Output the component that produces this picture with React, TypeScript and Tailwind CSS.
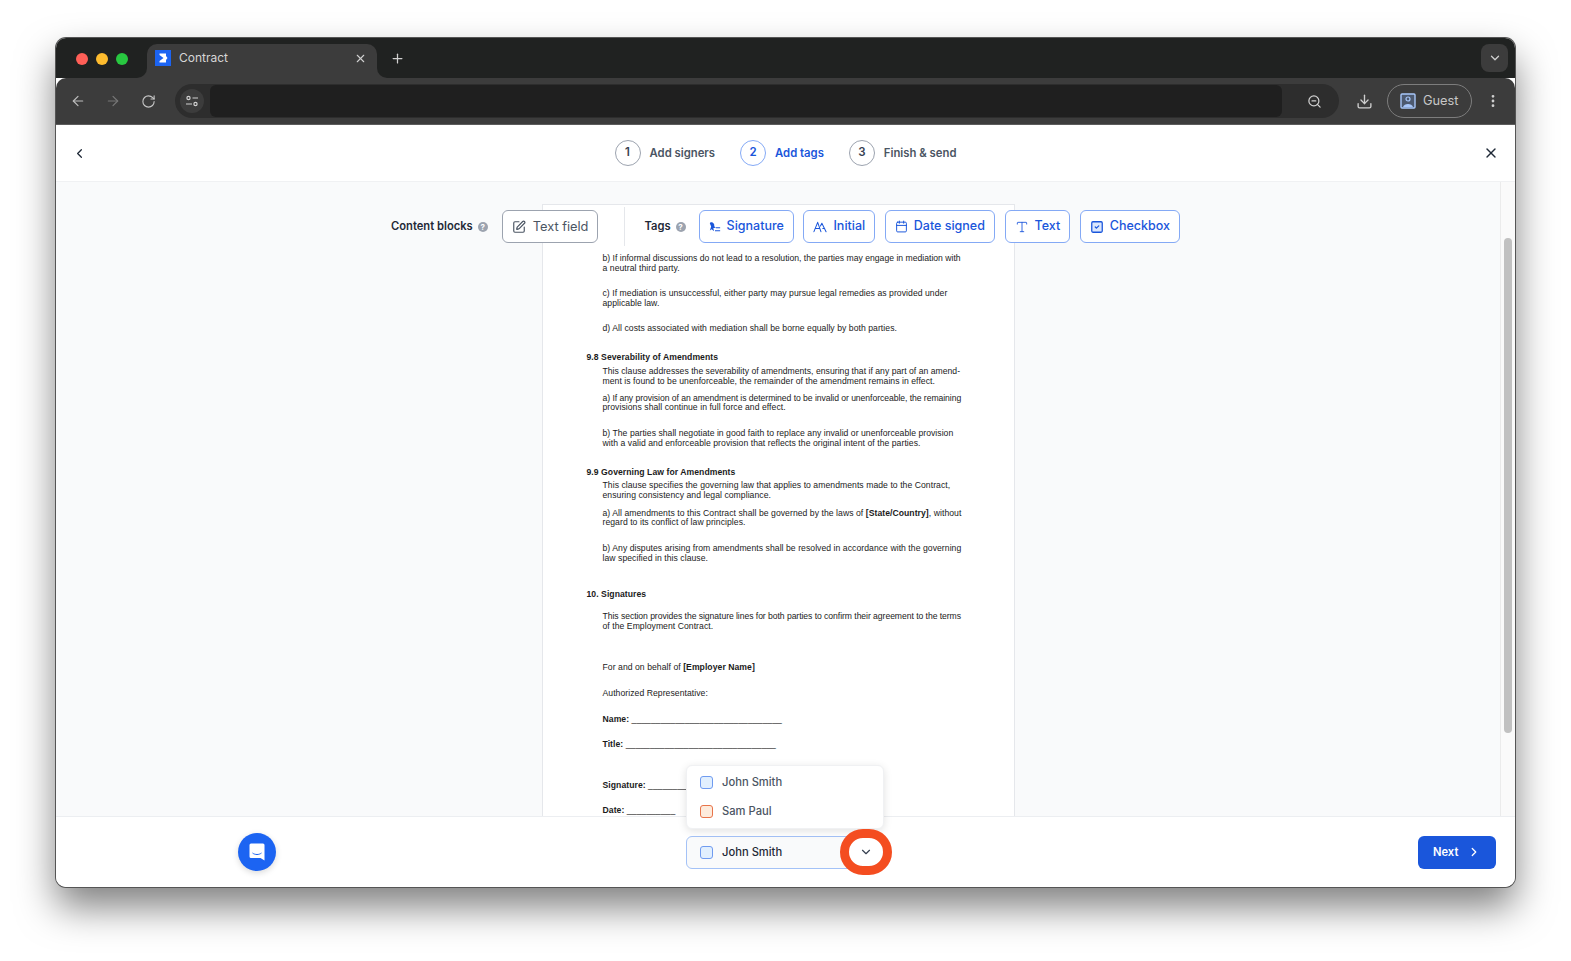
import React from "react";
import {
  ArrowLeft,
  ArrowRight,
  Calendar,
  ChevronDown,
  ChevronLeft,
  ChevronRight,
  Download,
  EllipsisVertical,
  Plus,
  RotateCw,
  SquareCheck,
  SquarePen,
  Type,
  X,
  ZoomOut,
} from "lucide-react";

const Help = () => (
  <span className="flex h-[10px] w-[10px] items-center justify-center rounded-full bg-[#9ca3af] text-[8px] font-bold leading-none text-white">
    ?
  </span>
);

const SignatureIcon = () => (
  <svg width="12" height="14" viewBox="0 0 14 14" fill="none">
    <path d="M1 3 C1 1.5 3 1 4.5 2 C6 3 6.5 4.5 6 6 L8 7.5 L5 8.5 L6 12 L3 9.5 L1 11 L2.5 6.5 Z" fill="#1a56db" />
    <path d="M8 8 H13 M7 11.5 H13" stroke="#1a56db" strokeWidth="1.2" />
  </svg>
);

const InitialIcon = () => (
  <svg width="14" height="14" viewBox="0 0 15 14" fill="none" stroke="#1a56db" strokeWidth="1.1" strokeLinecap="round" strokeLinejoin="round">
    <path d="M1 12 L5 2 L8.5 12 M2.8 8.5 H7" />
    <path d="M8 6 L9.5 3 L14 12 M10.5 8.5 H12.5" />
  </svg>
);

const TagButton = ({ icon, label }: { icon: React.ReactNode; label: string }) => (
  <button className="flex h-[33px] items-center gap-[6px] rounded-[6px] border border-[#84a9f5] bg-white px-[9px] text-[12.5px] font-medium text-[#1a56db]">
    {icon}
    {label}
  </button>
);

const Step = ({ n, label, active }: { n: number; label: string; active?: boolean }) => (
  <div className="flex items-center gap-[9px]">
    <span
      className={`flex h-[26px] w-[26px] items-center justify-center rounded-full border text-[11.5px] font-semibold ${
        active ? "border-[#84a9f5] text-[#1a56db]" : "border-[#9ca3af] text-[#374151]"
      }`}
    >
      {n}
    </span>
    <span className={`text-[11.3px] font-semibold ${active ? "text-[#1a56db]" : "text-[#4b5563]"}`}>{label}</span>
  </div>
);

const SignerBox = ({ orange }: { orange?: boolean }) => (
  <span
    className={`h-[13px] w-[13px] rounded-[3px] border ${
      orange ? "border-[#e8744a] bg-[#fdebdc]" : "border-[#6f9bf0] bg-[#e1effe]"
    }`}
  />
);

// Body text of the contract page, with line breaks as in the PDF
const P = ({ className, children }: { className?: string; children: React.ReactNode }) => (
  <p className={`ml-[60px] whitespace-nowrap ${className ?? ""}`}>{children}</p>
);

const H = ({ className, children }: { className: string; children: React.ReactNode }) => (
  <p className={`ml-[44px] whitespace-nowrap font-bold ${className}`}>{children}</p>
);

const ContractPage = () => (
  <div className="h-[640px] w-[473px] shrink-0 border-x border-t border-[#e5e7eb] bg-white pt-[49px] font-['Liberation_Sans',Arial,sans-serif] text-[8.65px] leading-[9.7px] tracking-[0.05px] text-[#1b1b1b]">
    <P>
      <span className="tracking-normal">
        b) If informal discussions do not lead to a resolution, the parties may engage in mediation with
      </span>
      <br />a neutral third party.
    </P>
    <P className="mt-[16px]">
      c) If mediation is unsuccessful, either party may pursue legal remedies as provided under
      <br />
      applicable law.
    </P>
    <P className="mt-[15px]">d) All costs associated with mediation shall be borne equally by both parties.</P>
    <H className="mt-[19px]">9.8 Severability of Amendments</H>
    <P className="mt-[5px]">
      <span className="tracking-[0.02px]">
        This clause addresses the severability of amendments, ensuring that if any part of an amend-
      </span>
      <br />
      ment is found to be unenforceable, the remainder of the amendment remains in effect.
    </P>
    <P className="mt-[7px]">
      <span className="tracking-[-0.06px]">
        a) If any provision of an amendment is determined to be invalid or unenforceable, the remaining
      </span>
      <br />
      provisions shall continue in full force and effect.
    </P>
    <P className="mt-[16px]">
      <span className="tracking-[0.03px]">
        b) The parties shall negotiate in good faith to replace any invalid or unenforceable provision
      </span>
      <br />
      with a valid and enforceable provision that reflects the original intent of the parties.
    </P>
    <H className="mt-[20px]">9.9 Governing Law for Amendments</H>
    <P className="mt-[3px]">
      This clause specifies the governing law that applies to amendments made to the Contract,
      <br />
      ensuring consistency and legal compliance.
    </P>
    <P className="mt-[8px]">
      a) All amendments to this Contract shall be governed by the laws of <b>[State/Country]</b>, without
      <br />
      regard to its conflict of law principles.
    </P>
    <P className="mt-[16px]">
      b) Any disputes arising from amendments shall be resolved in accordance with the governing
      <br />
      law specified in this clause.
    </P>
    <H className="mt-[27px]">10. Signatures</H>
    <P className="mt-[12px]">
      <span className="tracking-[-0.06px]">
        This section provides the signature lines for both parties to confirm their agreement to the terms
      </span>
      <br />
      of the Employment Contract.
    </P>
    <P className="mt-[32px]">
      For and on behalf of <b>[Employer Name]</b>
    </P>
    <P className="mt-[16px]">Authorized Representative:</P>
    <P className="mt-[16px]">
      <b>Name:</b> _______________________________
    </P>
    <P className="mt-[15px]">
      <b>Title:</b> _______________________________
    </P>
    <P className="mt-[32px]">
      <b>Signature:</b> ________
    </P>
    <P className="mt-[15px]">
      <b>Date:</b> __________
    </P>
  </div>
);

const BrowserChrome = () => (
  <div className="shrink-0 font-['Inter',sans-serif]">
    <div className="flex h-[40px] items-end bg-[#202221] pl-[20px]">
      <div className="mb-[13px] flex gap-[8px]">
        <span className="h-[12px] w-[12px] rounded-full bg-[#ff5f57]" />
        <span className="h-[12px] w-[12px] rounded-full bg-[#febc2e]" />
        <span className="h-[12px] w-[12px] rounded-full bg-[#28c840]" />
      </div>
      <div className="relative ml-[19px] flex h-[34px] w-[230px] items-center rounded-t-[10px] bg-[#3c3c3c] pb-[6px] pl-[8px] pr-[10px]">
        {/* flares where the tab meets the toolbar */}
        <span className="absolute bottom-0 left-[-10px] h-[10px] w-[10px] bg-[#3c3c3c]">
          <span className="block h-full w-full rounded-br-[10px] bg-[#202221]" />
        </span>
        <span className="absolute bottom-0 right-[-10px] h-[10px] w-[10px] bg-[#3c3c3c]">
          <span className="block h-full w-full rounded-bl-[10px] bg-[#202221]" />
        </span>
        <span className="flex h-4 w-4 items-center justify-center bg-[#1c64f2]">
          <svg width="16" height="16" viewBox="0 0 16 16">
            <path d="M4.5 3.5 H11 V6 L12.5 8 L11 10 V12.5 H4.5 V11 L8.5 8 L4.5 5 Z" fill="white" />
          </svg>
        </span>
        <span className="ml-[8px] flex-1 text-[12px] text-[#d6d6d6]">Contract</span>
        <X size={13} strokeWidth={2} className="text-[#d0d0d0]" />
      </div>
      <Plus size={15} strokeWidth={2} className="mb-[12px] ml-[13px] text-[#d0d0d0]" />
      <div className="mb-[6px] ml-auto mr-[7px] flex h-[28px] w-[27px] items-center justify-center rounded-[8px] bg-[#3c3c3c]">
        <ChevronDown size={14} strokeWidth={2.2} className="text-[#d0d0d0]" />
      </div>
    </div>
    <div className="flex h-[47px] items-center rounded-t-[10px] border-b border-[#5c5c5c] bg-[#3c3c3c] pl-[14px]">
      <ArrowLeft size={16} strokeWidth={1.8} className="text-[#bdbdbd]" />
      <ArrowRight size={16} strokeWidth={1.8} className="ml-[19px] text-[#777777]" />
      <RotateCw size={15} strokeWidth={1.8} className="ml-[20px] text-[#c4c4c4]" />
      <div className="ml-[19px] flex h-[34px] w-[1164px] items-center rounded-full bg-[#2d2d2d] pl-[5px]">
        <span className="flex h-[24px] w-[24px] items-center justify-center rounded-full bg-[#3c3c3c]">
          <svg width="14" height="14" viewBox="0 0 14 14" fill="none" stroke="#d0d0d0" strokeWidth="1.2">
            <circle cx="3.5" cy="4" r="1.6" />
            <path d="M7.5 4 H13 M1 10 H7" />
            <circle cx="10.5" cy="10" r="1.6" />
          </svg>
        </span>
        <div className="ml-[6px] h-[32px] w-[1072px] rounded-[6px] bg-[#1f1f1f]" />
        <ZoomOut size={15} strokeWidth={2} className="ml-[25px] text-[#cfcfcf]" />
      </div>
      <Download size={17} strokeWidth={1.9} className="ml-[17px] text-[#cfcfcf]" />
      <div className="ml-[14px] flex h-[34px] w-[85px] items-center gap-[7px] rounded-full border border-[#7d7d7d] pl-[12px]">
        <svg width="16" height="16" viewBox="0 0 16 16" fill="none">
          <rect x="1" y="1" width="14" height="14" rx="1" fill="#4d5a70" stroke="#a8c7fa" strokeWidth="1.4" />
          <circle cx="8" cy="6" r="2" stroke="#a8c7fa" strokeWidth="1.2" />
          <path d="M3 14 C4 10 12 10 13 14 Z" fill="#a8c7fa" />
        </svg>
        <span className="text-[12.8px] text-[#c7c7c7]">Guest</span>
      </div>
      <EllipsisVertical size={16} strokeWidth={2.2} className="ml-[13px] text-[#cfcfcf]" />
    </div>
  </div>
);

const App: React.FC = () => {
  return (
    <div className="h-[961px] w-[1571px] overflow-hidden bg-white pl-[56px] pt-[38px] font-['Inter',sans-serif]">
      <div className="flex h-[849px] w-[1459px] flex-col overflow-hidden rounded-[10px] bg-white shadow-[0_0_0_1px_#555555,0_20px_38px_rgba(0,0,0,0.5)]">
        <BrowserChrome />

        {/* Stepper */}
        <header className="flex h-[57px] shrink-0 items-center justify-between border-b border-[#f0f1f3] px-[16px]">
          <ChevronLeft size={15} strokeWidth={2} className="text-[#1f2937]" />
          <div className="ml-[1px] flex gap-[25px]">
            <Step n={1} label="Add signers" />
            <Step n={2} label="Add tags" active />
            <Step n={3} label="Finish & send" />
          </div>
          <X size={16} strokeWidth={2} className="text-[#1f2937]" />
        </header>

        {/* Document area */}
        <main className="relative flex min-h-0 flex-1 overflow-hidden">
          <div className="flex flex-1 justify-center bg-[#f9fafb] pt-[22px]">
            <ContractPage />
          </div>
          <div className="w-[15px] shrink-0 border-l border-[#ebebeb] bg-[#fafafa] pl-[3px] pt-[56px]">
            <div className="h-[495px] w-[8px] rounded-full bg-[#c1c1c1]" />
          </div>

          {/* Toolbar floats over the page */}
          <div className="absolute left-[335px] top-[25px] flex items-center">
            <span className="text-[11.2px] font-semibold text-[#1f2937]">Content blocks</span>
            <span className="ml-[5px]">
              <Help />
            </span>
            <button className="ml-[14px] flex h-[33px] items-center gap-[7px] rounded-[6px] border border-[#9ca3af] bg-white px-[9px] text-[12.8px] font-normal text-[#4b5563]">
              <SquarePen size={14} strokeWidth={2} className="text-[#4b5563]" />
              Text field
            </button>
            <div className="ml-[26px] h-[39px] w-px bg-[#e5e7eb]" />
            <span className="ml-[19px] text-[11.2px] font-semibold text-[#1f2937]">Tags</span>
            <span className="ml-[5px]">
              <Help />
            </span>
            <div className="ml-[13px] flex gap-[9.6px]">
              <TagButton icon={<SignatureIcon />} label="Signature" />
              <TagButton icon={<InitialIcon />} label="Initial" />
              <TagButton icon={<Calendar size={13} strokeWidth={1.8} />} label="Date signed" />
              <TagButton icon={<Type size={14} strokeWidth={1.5} />} label="Text" />
              <TagButton icon={<SquareCheck size={14} strokeWidth={2.2} fill="#dbe7fd" />} label="Checkbox" />
            </div>
          </div>
        </main>

        {/* Footer */}
        <footer className="relative flex h-[71px] shrink-0 items-center border-t border-[#eceef1] bg-white">
          <button className="ml-[182px] flex h-[38px] w-[38px] items-center justify-center rounded-full bg-[#1c64f2] shadow-[0_2px_6px_rgba(0,0,0,0.15)]">
            <svg width="16" height="18" viewBox="0 0 16 18">
              <path d="M2 0.5 H14 A1.5 1.5 0 0 1 15.5 2 V17.5 L11.5 15 H2 A1.5 1.5 0 0 1 0.5 13.5 V2 A1.5 1.5 0 0 1 2 0.5 Z" fill="white" />
              <path d="M3.5 10 C6 12 10 12 12.5 10" stroke="#1c64f2" strokeWidth="1" fill="none" />
            </svg>
          </button>

          <div className="relative ml-[410px] w-[198px]">
            <div className="absolute bottom-[40px] left-0 w-[198px] rounded-[6px] border border-[#f0f1f3] bg-white py-[2px] shadow-[0_2px_8px_rgba(0,0,0,0.12)]">
              <div className="flex h-[29px] items-center gap-[9px] pl-[13px] text-[11.2px] font-medium text-[#4b5563]">
                <SignerBox />
                John Smith
              </div>
              <div className="flex h-[29px] items-center gap-[9px] pl-[13px] text-[11.2px] font-medium text-[#4b5563]">
                <SignerBox orange />
                Sam Paul
              </div>
            </div>
            <div className="flex h-[33px] items-center gap-[9px] rounded-[6px] border border-[#a4c2f7] bg-[#f9fafb] pl-[13px] text-[11.2px] font-medium text-[#1f2937]">
              <SignerBox />
              John Smith
            </div>
            {/* Red annotation ring round the chevron */}
            <div className="absolute left-[154px] top-[-7px] flex h-[46px] w-[52px] items-center justify-center rounded-full border-[9px] border-[#f44d20] bg-white">
              <ChevronDown size={14} strokeWidth={2} className="text-[#374151]" />
            </div>
          </div>

          <button className="ml-auto mr-[19px] flex h-[33px] w-[78px] items-center gap-[9px] rounded-[6px] bg-[#1a56db] pl-[15px] text-[11.2px] font-semibold text-white">
            Next
            <ChevronRight size={14} strokeWidth={2.2} />
          </button>
        </footer>
      </div>
    </div>
  );
};

export default App;
